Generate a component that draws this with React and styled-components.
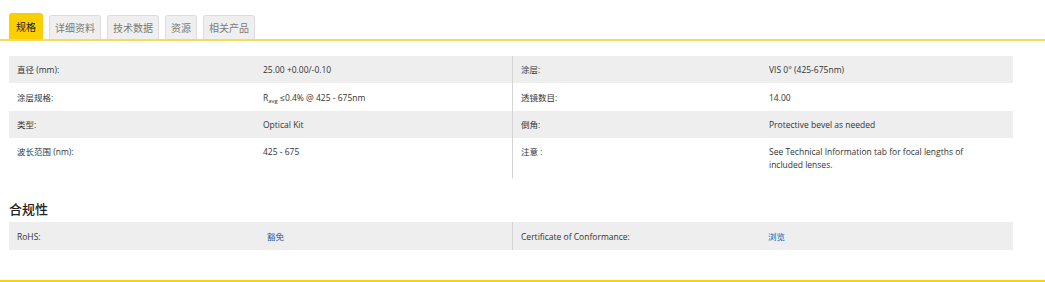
import React from "react";
import styled, { createGlobalStyle } from "styled-components";

const Global = createGlobalStyle`
  html, body { margin: 0; padding: 0; background: #fff; }
  body { font-family: "Open Sans", "Noto Sans CJK SC", sans-serif; color: #333; }
`;

const Page = styled.div`
  width: 1045px;
  height: 282px;
  box-sizing: border-box;
  border-bottom: 2px solid #fdd10a;
`;

const TabBar = styled.div`
  display: flex;
  align-items: flex-end;
  gap: 6px;
  height: 41px;
  padding-left: 9px;
  box-sizing: border-box;
  border-bottom: 2px solid #f6dc55;
`;

const Tab = styled.div`
  height: ${(p) => (p.$active ? 26 : 24)}px;
  padding: 0 ${(p) => (p.$active ? 6 : 5)}px;
  box-sizing: border-box;
  display: flex;
  align-items: center;
  font-family: "Noto Sans CJK SC", sans-serif;
  font-size: 10px;
  color: ${(p) => (p.$active ? "#222" : "#7a7a7a")};
  background: ${(p) => (p.$active ? "#fcd000" : "#efefef")};
  border: 1px solid ${(p) => (p.$active ? "#fcd000" : "#dcdcdc")};
  border-bottom: none;
  border-radius: 3px 3px 0 0;
`;

const Content = styled.div`
  padding: 15px 32px 0 9px;
`;

const Table = styled.div`
  display: flex;
  flex-direction: column;
  width: 1004px;
`;

const Row = styled.div`
  display: grid;
  grid-template-columns: ${(p) => p.$cols};
  min-height: ${(p) => (p.$tall ? "28px" : "0")};
  background: ${(p) => (p.$shade ? "#eeeeee" : "#fff")};
  font-size: 8.5px;
  line-height: 13px;
`;

const Cell = styled.div`
  padding: ${(p) => (p.$mid ? "7.5px 8px" : "7px 8px")};
  border-left: ${(p) => (p.$divider ? "1px solid #d4d4d4" : "none")};
  font-family: "Open Sans", "Noto Sans CJK SC", sans-serif;
`;

const Link = styled.a`
  color: #1f5aa6;
  text-decoration: none;
  font-family: "Noto Sans CJK SC", sans-serif;
`;

const Heading = styled.h3`
  margin: 23px 0 5px 0;
  font-family: "Noto Sans CJK SC", sans-serif;
  font-weight: 500;
  font-size: 13px;
  line-height: 16px;
  color: #222;
`;

const Sub = styled.sub`
  font-size: 6px;
  line-height: 0;
  vertical-align: -2px;
`;

const tabs = ["规格", "详细资料", "技术数据", "资源", "相关产品"];

const specs = [
  ["直径 (mm):", "25.00 +0.00/-0.10", "涂层:", "VIS 0° (425-675nm)"],
  [
    "涂层规格:",
    <span>R<Sub>avg</Sub> ≤0.4% @ 425 - 675nm</span>,
    "透镜数目:",
    "14.00",
  ],
  ["类型:", "Optical Kit", "倒角:", "Protective bevel as needed"],
  [
    "波长范围 (nm):",
    "425 - 675",
    "注意 :",
    <span>See Technical Information tab for focal lengths of<br />included lenses.</span>,
  ],
];

export default function App() {
  return (
    <Page>
      <Global />
      <TabBar>
        {tabs.map((t, i) => (
          <Tab key={t} $active={i === 0}>{t}</Tab>
        ))}
      </TabBar>
      <Content>
        <Table>
          {specs.map((r, i) => (
            <Row key={i} $shade={i % 2 === 0} $cols="246px 257px 249px 1fr">
              <Cell $mid={i === 1}>{r[0]}</Cell>
              <Cell $mid={i === 1}>{r[1]}</Cell>
              <Cell $mid={i === 1} $divider>{r[2]}</Cell>
              <Cell $mid={i === 1}>{r[3]}</Cell>
            </Row>
          ))}
        </Table>
        <Heading>合规性</Heading>
        <Table>
          <Row $shade $cols="250px 253px 248px 1fr">
            <Cell $mid>RoHS:</Cell>
            <Cell $mid><Link href="#">豁免</Link></Cell>
            <Cell $mid $divider>Certificate of Conformance:</Cell>
            <Cell $mid><Link href="#">浏览</Link></Cell>
          </Row>
        </Table>
      </Content>
    </Page>
  );
}
